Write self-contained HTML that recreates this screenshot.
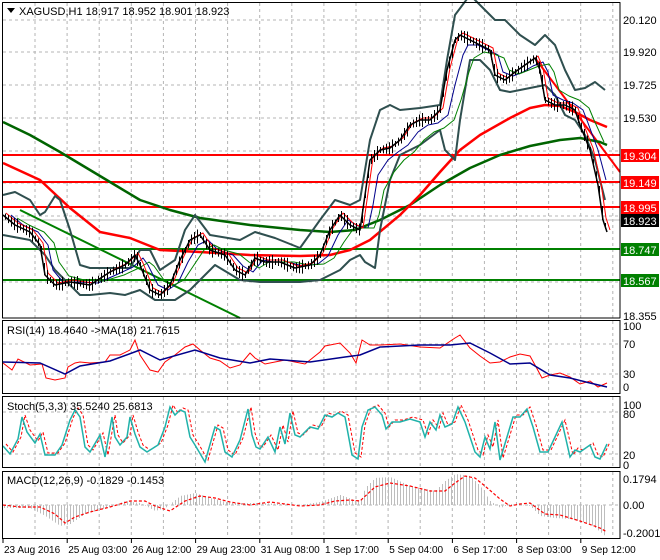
<!DOCTYPE html>
<html><head><meta charset="utf-8"><style>
body{margin:0;background:#fff;}
svg{display:block;font-family:"Liberation Sans",sans-serif;font-size:11px;}
</style></head><body>
<svg id="s" width="660" height="560" viewBox="0 0 660 560" xmlns="http://www.w3.org/2000/svg">
<rect width="660" height="560" fill="#fff"/>
<g id="grid" stroke="#b4b4b4" stroke-dasharray="3,3" stroke-width="1"></g>
<g fill="none" stroke-linejoin="round">
<line x1="3" y1="220" x2="620" y2="220" stroke="#bbb"/>
<line x1="3" y1="155" x2="620" y2="155" stroke="#f00" stroke-width="2"/>
<line x1="3" y1="182" x2="620" y2="182" stroke="#f00" stroke-width="2"/>
<line x1="3" y1="207" x2="620" y2="207" stroke="#f00" stroke-width="2"/>
<line x1="3" y1="249" x2="620" y2="249" stroke="#008000" stroke-width="2"/>
<line x1="3" y1="280" x2="620" y2="280" stroke="#008000" stroke-width="2"/>
<line x1="20" y1="210" x2="240" y2="318" stroke="#008000" stroke-width="2"/>
<line x1="535" y1="58" x2="620" y2="172" stroke="#f00" stroke-width="2"/>
<polyline stroke="#006400" stroke-width="2.5" points="3,122 30,135 60,152 90,170 115,185 140,200 170,210 200,218 250,225 300,230 330,232 355,230 380,220 410,205 440,185 470,168 500,155 530,146 560,140 580,138 600,142 607,145"/>
<polyline stroke="#f00" stroke-width="2.5" points="3,163 40,180 70,208 100,232 130,238 160,250 200,252 250,255 300,256 330,255 350,250 370,240 400,215 420,195 440,172 460,150 480,135 510,118 530,108 545,105 560,106 575,112 590,120 607,127"/>
<polyline stroke="#2f4f4f" stroke-width="2" points="3,195 15,192 30,200 40,215 45,212 55,196 60,200 70,230 80,265 90,268 130,268 140,250 150,250 160,270 175,260 185,230 195,215 210,235 240,240 255,232 275,238 300,248 320,220 335,200 350,205 360,200 370,140 380,110 390,105 400,110 420,108 440,105 447,60 455,15 470,-5 480,5 495,20 505,20 520,35 535,45 545,35 555,45 565,70 575,90 585,88 595,82 605,90"/>
<polyline stroke="#2f4f4f" stroke-width="2" points="3,235 30,240 45,255 55,270 70,285 80,295 90,295 110,293 125,295 140,290 155,300 175,300 190,290 200,280 215,265 240,280 260,282 300,282 320,280 340,270 350,260 360,255 365,262 375,268 380,230 390,180 400,155 420,145 440,130 445,150 455,160 460,120 470,60 480,60 490,70 500,90 510,92 530,88 545,85 555,95 565,115 575,120 585,135 595,160 605,200"/>
<polyline stroke="#00008b" stroke-width="1" transform="translate(8,0)" points="3,215 15,225 30,232 40,245 45,270 55,282 70,282 90,283 110,274 125,267 135,258 140,265 150,285 160,290 170,283 180,262 190,245 200,240 210,250 225,255 235,266 245,272 255,260 265,262 280,262 295,266 310,264 320,256 330,235 340,220 350,226 360,228 365,205 370,175 380,160 390,152 400,145 410,132 420,125 430,123 440,115 447,85 455,55 460,45 470,45 480,50 490,55 495,72 505,76 515,72 525,66 535,62 540,72 545,95 555,100 565,103 575,110 580,123 590,150 598,180"/>
<polyline stroke="#008000" stroke-width="1" transform="translate(14,0)" points="3,218 15,225 30,232 40,243 45,262 55,276 70,280 90,281 110,275 125,268 135,262 140,266 150,280 160,285 170,280 180,265 190,250 200,245 210,250 225,254 235,262 245,268 255,262 265,262 280,262 295,265 310,264 320,258 330,242 340,228 350,228 360,228 365,215 370,190 380,172 390,160 400,152 410,140 420,132 430,128 440,120 447,100 455,72 460,58 470,52 480,54 490,58 495,70 505,74 515,70 525,66 535,64 540,72 545,90 555,96 565,100 575,108 580,120 590,142"/>
<polyline id="plr" stroke="#f00" stroke-width="1" transform="translate(3,-2)" points=""/>
<polyline id="pl" stroke="#000" stroke-width="1.5" points="3,215 15,225 30,232 40,245 45,275 55,285 70,282 90,285 110,272 125,265 135,255 140,265 150,290 160,295 170,285 180,260 190,240 200,235 210,250 225,255 235,270 245,275 255,258 265,262 280,262 295,268 310,265 320,255 330,230 340,215 350,225 360,230 365,195 370,160 380,150 390,148 400,140 410,125 420,120 430,120 440,110 447,70 455,40 460,35 470,40 480,45 490,50 495,75 505,80 515,72 525,65 535,58 540,70 545,100 555,105 565,105 575,110 580,125 590,150 598,185 603,220 607,232"/>
<g id="ticks" stroke="#000" stroke-width="1"></g>
<rect x="2.5" y="2.5" width="617.5" height="315.5" stroke="#000"/>
</g>
<g font-size="11">
<path d="M7,8 h8 l-4,5z" fill="#000"/>
<text x="19" y="15" fill="#000">XAGUSD,H1  18.917 18.952 18.901 18.923</text>
<g fill="#000">
<text x="623" y="24">20.120</text><text x="623" y="56">19.920</text><text x="623" y="89">19.725</text><text x="623" y="122">19.530</text><text x="623" y="320">18.355</text>
</g>
<rect x="621" y="149" width="38" height="13" fill="#f00"/><text x="623" y="160" fill="#fff">19.304</text>
<rect x="621" y="176" width="38" height="13" fill="#f00"/><text x="623" y="187" fill="#fff">19.149</text>
<rect x="621" y="201" width="38" height="13" fill="#f00"/><text x="623" y="212" fill="#fff">18.995</text>
<rect x="621" y="214" width="38" height="13" fill="#000"/><text x="623" y="225" fill="#fff">18.923</text>
<rect x="621" y="243" width="38" height="13" fill="#008000"/><text x="623" y="254" fill="#fff">18.747</text>
<rect x="621" y="274" width="38" height="13" fill="#008000"/><text x="623" y="285" fill="#fff">18.567</text>
</g>
<g fill="none">
<polyline stroke="#f00" stroke-width="1" points="3,363 12,370 18,359 30,365 42,364 46,378 55,380 65,378 68,367 75,363 80,362 90,363 105,362 110,355 120,355 130,350 135,340 140,355 150,370 158,372 165,362 175,355 185,347 193,344 200,350 210,358 220,361 230,368 240,365 250,353 255,358 265,364 275,362 285,360 295,362 305,364 320,352 325,346 340,343 350,353 356,363 362,340 370,345 380,345 400,344 420,347 440,348 455,338 460,335 470,348 480,356 490,363 500,362 510,357 520,354 530,356 535,365 542,378 550,375 560,373 570,377 580,384 590,381 598,387 607,383"/>
<polyline stroke="#00008b" stroke-width="1.5" points="3,362 40,363 65,374 80,366 110,361 140,350 160,360 195,350 220,358 250,363 270,359 310,362 345,357 360,355 380,347 420,345 450,345 470,343 490,353 510,364 530,363 550,375 570,378 590,383 607,387"/>
<rect x="2.5" y="320.5" width="617.5" height="73" stroke="#000"/>
<polyline id="str" stroke="#f00" stroke-width="1" stroke-dasharray="3,2" transform="translate(3,-5)" points=""/>
<polyline id="st" stroke="#20b2aa" stroke-width="1.5" transform="translate(0,-3)" points="3,449 10,457 18,442 22,420 27,435 35,446 40,437 45,458 55,458 62,448 70,423 75,413 80,420 85,450 90,455 100,438 105,460 112,420 115,440 120,448 127,440 130,420 135,437 140,450 147,455 158,448 165,430 170,410 175,418 180,413 185,415 190,440 195,448 205,465 215,430 220,433 225,455 232,460 240,443 248,412 252,438 256,450 260,452 268,440 275,455 280,430 285,447 290,416 295,438 300,440 310,430 318,432 325,418 332,420 338,416 345,420 352,458 358,462 362,430 368,413 375,410 382,418 386,432 392,425 400,425 410,422 420,425 425,440 430,425 436,433 440,418 445,430 452,427 458,410 465,425 470,440 475,455 480,460 485,440 490,452 495,425 500,463 507,440 513,420 520,420 527,412 533,430 540,455 548,455 555,440 562,425 570,460 575,453 580,455 590,448 595,460 600,462 607,447"/>
<rect x="2.5" y="396.5" width="617.5" height="71" stroke="#000"/>
</g>
<text x="7" y="334">RSI(14) 18.4640  -&gt;MA(18) 21.7615</text>
<text x="623" y="330">100</text><text x="623" y="348">70</text><text x="623" y="378">30</text><text x="623" y="391">0</text>
<text x="7" y="410">Stoch(5,3,3) 35.5240 25.6813</text>
<text x="623" y="409">100</text><text x="623" y="418">80</text><text x="623" y="459">20</text><text x="623" y="469">0</text>
<g id="hist" stroke="#bdbdbd" stroke-width="1"></g>
<polyline fill="none" stroke="#f00" stroke-dasharray="3,2" stroke-width="1.2" transform="translate(0,-4)" points="3,509 20,511 40,511 55,518 65,527 75,521 90,516 110,511 130,505 145,505 155,510 170,515 185,505 200,500 215,502 230,506 250,509 270,506 300,510 320,509 335,505 350,504 360,505 375,491 390,487 410,490 430,495 445,495 455,487 465,480 475,482 485,490 500,503 510,510 520,508 530,507 545,518 560,519 580,525 600,532 607,536"/>
<rect x="2.5" y="471.5" width="617.5" height="67" fill="none" stroke="#000"/>
<text x="7" y="484">MACD(12,26,9) -0.1829 -0.1453</text>
<text x="623" y="483">0.1794</text><text x="623" y="509">0.00</text><text x="623" y="537">-0.2001</text>
<g id="dates" font-size="10"></g>
</svg>
<script>
var NS="http://www.w3.org/2000/svg",g=document.getElementById("grid");
function ln(p,a,b,c,d){var l=document.createElementNS(NS,"line");l.setAttribute("x1",a);l.setAttribute("y1",b);l.setAttribute("x2",c);l.setAttribute("y2",d);p.appendChild(l);return l;}
for(var x=35;x<618;x+=32.1){ln(g,x,3,x,318);ln(g,x,321,x,393);ln(g,x,397,x,468);ln(g,x,472,x,538);}
[20,52,85,118,151,183,216,249,282].forEach(function(y){ln(g,3,y,620,y);});
[344,374,412,454,505].forEach(function(y){ln(g,3,y,620,y);});
document.getElementById("plr").setAttribute("points",document.getElementById("pl").getAttribute("points"));
document.getElementById("str").setAttribute("points",document.getElementById("st").getAttribute("points"));
function interp(pts,x){var i=0;while(i<pts.length-2&&pts[i+1][0]<x)i++;var a=pts[i],b=pts[i+1],t=(x-a[0])/(b[0]-a[0]);return a[1]+(b[1]-a[1])*t;}
var pp=document.getElementById("pl").getAttribute("points").split(" ").map(function(s){return s.split(",").map(Number);});
var tg=document.getElementById("ticks");
for(var x=5;x<607;x+=3){var y=interp(pp,x);var r=3+((x*7)%5);ln(tg,x+0.5,y-r,x+0.5,y+r);}
var h=[[3,512],[30,512],[45,520],[60,530],[70,528],[85,518],[110,511],[125,505],[140,507],[155,515],[165,512],[180,500],[195,497],[210,502],[230,507],[260,507],[300,509],[320,506],[340,499],[360,506],[365,492],[375,482],[390,481],[410,490],[435,495],[445,485],[455,478],[470,480],[480,490],[490,505],[500,512],[510,508],[530,510],[540,520],[555,522],[570,523],[590,528],[605,540]];
var hg=document.getElementById("hist");
for(var x=4;x<607;x+=3){ln(hg,x+0.5,505,x+0.5,interp(h,x)-4);}
var d=document.getElementById("dates"),L=["23 Aug 2016","25 Aug 03:00","26 Aug 12:00","29 Aug 23:00","31 Aug 08:00","1 Sep 17:00","5 Sep 04:00","6 Sep 17:00","8 Sep 03:00","9 Sep 12:00"];
L.forEach(function(s,k){var x=3+k*64.2;var tk=ln(d,x,538,x,543);tk.setAttribute("stroke","#000");var t=document.createElementNS(NS,"text");t.setAttribute("x",x+1);t.setAttribute("y",553);t.textContent=s;d.appendChild(t);});
</script>
</body></html>
